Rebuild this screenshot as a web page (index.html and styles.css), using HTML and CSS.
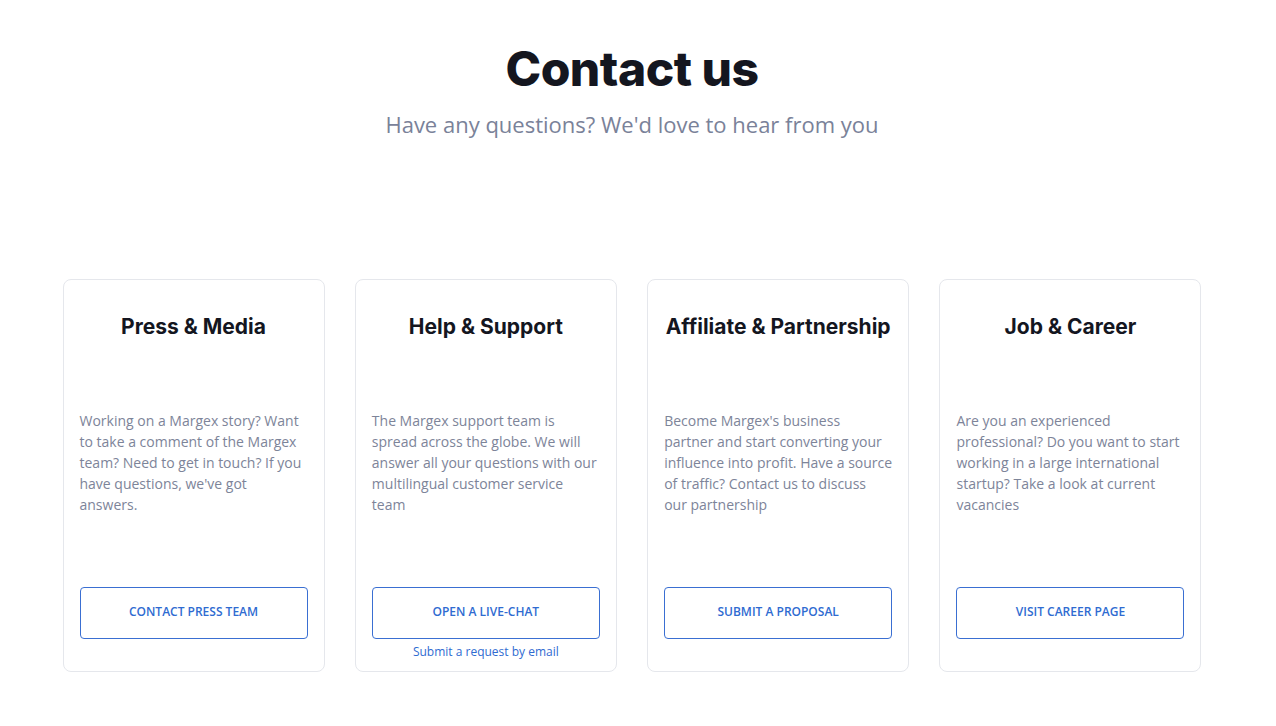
FILE: index.html
```html
<!DOCTYPE html>
<html>
<head>
    <title>Contact us</title>
    <link rel="stylesheet" href="styles.css">
</head>
<body>
    <div class="page">
        <div class="hero">
            <h1>Contact us</h1>
            <p class="lead">Have any questions? We'd love to hear from you</p>
        </div>

        <div class="cards">
            <div class="card">
                <h2>Press &amp; Media</h2>
                <p class="text">Working on a Margex story? Want to take a comment of the Margex team? Need to get in touch? If you have questions, we've got answers.</p>
                <div class="card-foot">
                    <a class="btn" href="#">Contact press team</a>
                </div>
            </div>
            <div class="card">
                <h2>Help &amp; Support</h2>
                <p class="text">The Margex support team is spread across the globe. We will answer all your questions with our multilingual customer service team</p>
                <div class="card-foot">
                    <a class="btn" href="#">Open a live-chat</a>
                    <a class="sub-link" href="#">Submit a request by email</a>
                </div>
            </div>
            <div class="card">
                <h2>Affiliate &amp; Partnership</h2>
                <p class="text">Become Margex's business partner and start converting your influence into profit. Have a source of traffic? Contact us to discuss our partnership</p>
                <div class="card-foot">
                    <a class="btn" href="#">Submit a proposal</a>
                </div>
            </div>
            <div class="card">
                <h2>Job &amp; Career</h2>
                <p class="text">Are you an experienced professional? Do you want to start working in a large international startup? Take a look at current vacancies</p>
                <div class="card-foot">
                    <a class="btn" href="#">Visit career page</a>
                </div>
            </div>
        </div>
    </div>
</body>
</html>
```

FILE: styles.css
```css
/* Contact page */
body {
    margin: 0;
    padding-right: 12px;
    background-color: #fff;
    font-family: "Open Sans", Arial, sans-serif;
}
.page {
    width: 1139px;
    margin: 0 auto;
    padding-top: 38px;
}
.hero {
    text-align: center;
    height: 241px;
}
h1 {
    font-family: "Inter", "Noto Sans", sans-serif;
    font-weight: 800;
    font-size: 48px;
    line-height: 62px;
    letter-spacing: -0.5px;
    color: #14161f;
    margin: 0;
}
.lead {
    font-size: 22px;
    line-height: 30px;
    color: #7a8299;
    margin: 9px 0 0;
}
.cards {
    display: grid;
    grid-template-columns: repeat(4, 262px);
    justify-content: space-between;
}
.card {
    height: 393px;
    box-sizing: border-box;
    border: 1px solid #e5e7ec;
    border-radius: 8px;
    padding: 35px 16px 0;
    display: flex;
    flex-direction: column;
}
h2 {
    font-family: "Inter", "Noto Sans", sans-serif;
    font-weight: 700;
    font-size: 21px;
    line-height: 24px;
    color: #14161f;
    text-align: center;
    margin: 0 0 71px;
    white-space: nowrap;
}
.text {
    font-size: 14px;
    line-height: 21px;
    color: #7d8499;
    margin: 0;
}
.card-foot {
    margin-top: auto;
    height: 84px;
    display: flex;
    flex-direction: column;
    align-items: center;
}
.btn {
    display: flex;
    align-items: center;
    justify-content: center;
    width: 100%;
    height: 52px;
    box-sizing: border-box;
    padding-bottom: 4px;
    border: 1px solid #3a6fd2;
    border-radius: 4px;
    color: #2f6bd1;
    font-size: 12px;
    font-weight: 600;
    text-transform: uppercase;
    text-decoration: none;
}
.sub-link {
    margin-top: 4px;
    font-size: 12px;
    line-height: 18px;
    color: #2f6bd1;
    text-decoration: none;
}
```
